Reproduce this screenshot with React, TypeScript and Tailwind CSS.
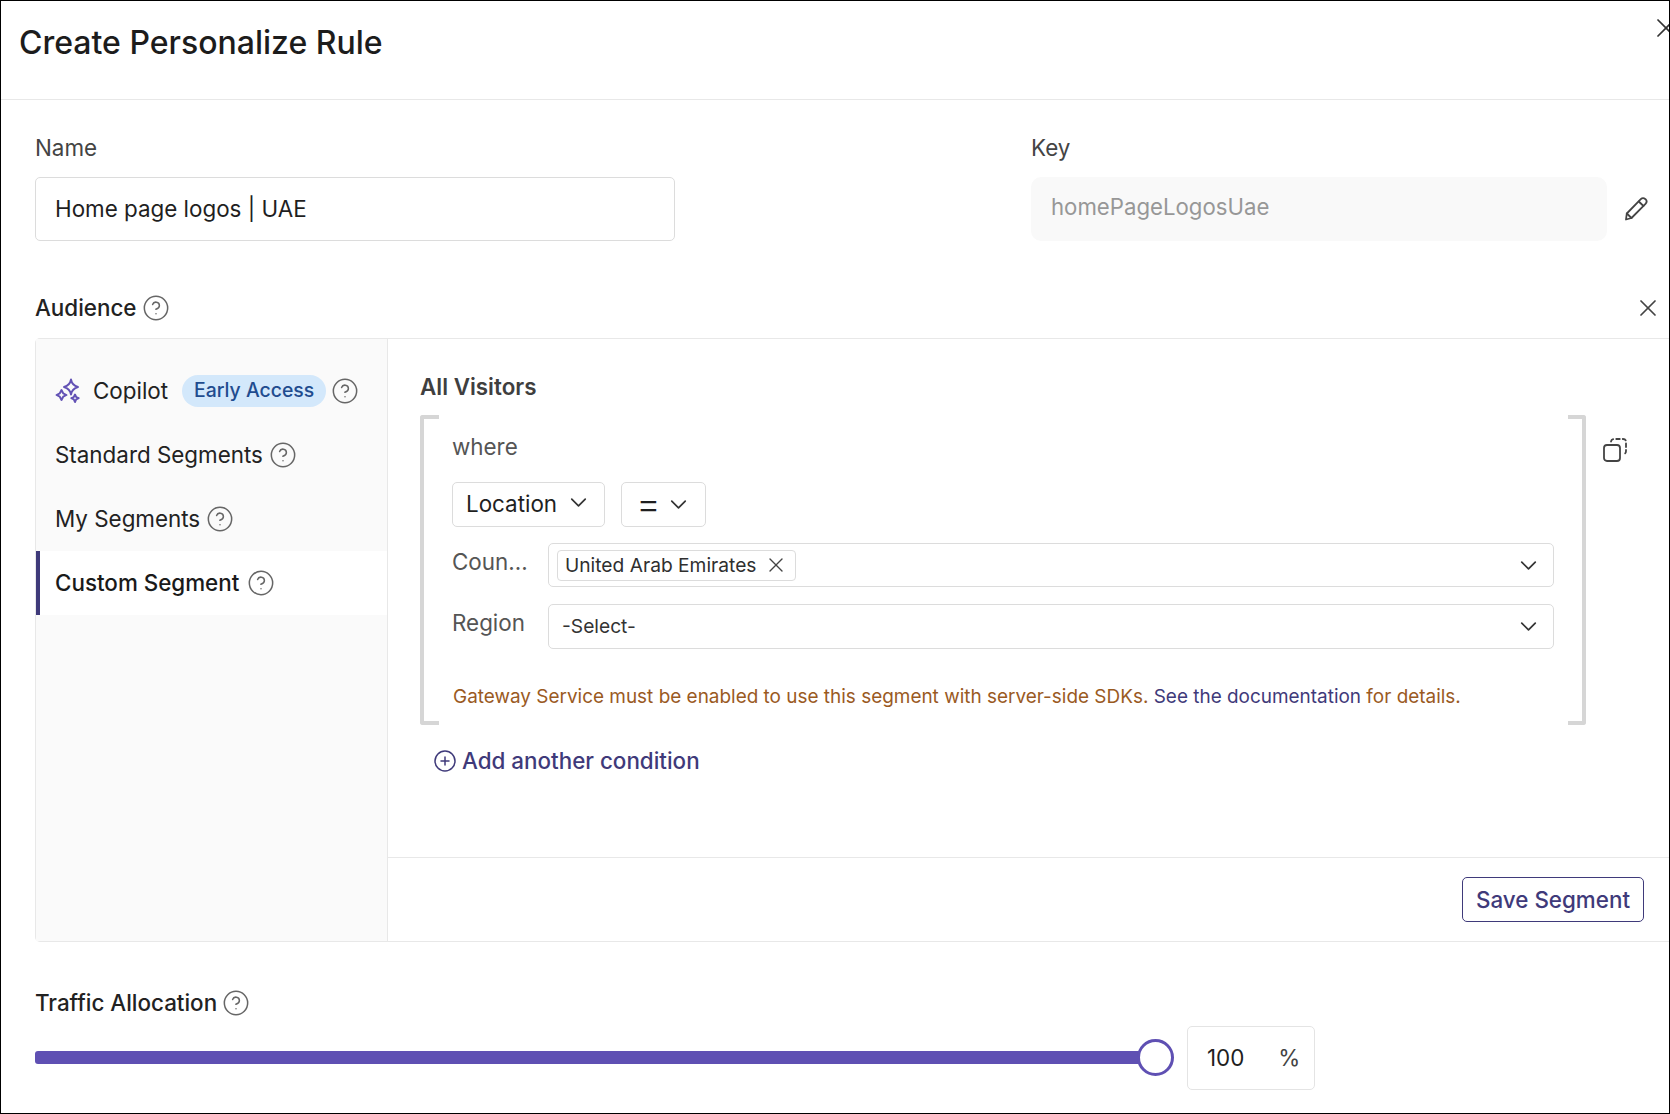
import { ChevronDown, CircleHelp, CirclePlus, X } from "lucide-react";

const Help = ({ className = "" }: { className?: string }) => (
  <CircleHelp size={28} strokeWidth={1.300} className={`text-[#666666] shrink-0 ${className}`} />
);

const Chevron = ({ className = "" }: { className?: string }) => (
  <ChevronDown size={27} strokeWidth={1.500} className={`-mx-[5.500px] shrink-0 text-[#333333] ${className}`} />
);

const Sparkles = () => (
  <svg width="26" height="26" viewBox="0 0 26 26" fill="none" stroke="#6352b5" strokeWidth="1.900" strokeLinejoin="round" className="shrink-0">
    <path d="M16 1.500 C16.800 6 18.500 7.800 23 9 C18.500 10.200 16.800 12 16 16.500 C15.200 12 13.500 10.200 9 9 C13.500 7.800 15.200 6 16 1.500Z" />
    <path d="M6.500 12 L8.200 15.300 L11.500 17 L8.200 18.700 L6.500 22 L4.800 18.700 L1.500 17 L4.800 15.300 Z" />
    <path d="M20 16.500 L21.200 19 L23.700 20.200 L21.200 21.400 L20 24 L18.800 21.400 L16.300 20.200 L18.800 19 Z" />
  </svg>
);

const Pencil = () => (
  <svg width="26" height="26" viewBox="0 0 26 26" fill="none" stroke="#444444" strokeWidth="1.800" strokeLinejoin="round" strokeLinecap="round" className="shrink-0">
    <path d="M3 23.500 L3.800 17.500 L17.800 3.200 C19 2 21 2 22.500 3.200 C23.800 4.500 23.800 6.500 22.500 7.800 L8.500 22 Z" />
    <path d="M15.800 5.500 L20.500 10" />
    <path d="M3.800 17.500 L8.500 22" />
  </svg>
);

const Duplicate = () => (
  <svg width="26" height="26" viewBox="0 0 26 26" fill="none" stroke="#444444" strokeWidth="1.800" strokeLinecap="round" className="shrink-0">
    <rect x="2" y="8" width="16" height="16" rx="3" />
    <path d="M9 4.500 C9.300 2.800 10.300 2 12 2 H21 C23 2 24 3 24 5 V14 C24 15.800 23.200 16.800 21.500 17" strokeDasharray="3.500 3" />
  </svg>
);

const Field = ({ children, className = "" }: { children: React.ReactNode; className?: string }) => (
  <div className={`flex items-center justify-between rounded-[5px] border border-[#dcdcdc] bg-white ${className}`}>{children}</div>
);

const NavItem = ({ children, active }: { children: React.ReactNode; active?: boolean }) => (
  <div
    className={`flex h-16 items-center text-[22.400px] ${
      active ? "gap-[8px] border-l-4 border-[#3f3a7a] bg-white pl-[15px] font-medium text-[#1a1a1a]" : "gap-[6px] pl-[19px] text-[#222222]"
    }`}
  >
    {children}
  </div>
);

export default function App() {
  return (
    <div className="relative flex h-[1114px] w-[1670px] flex-col overflow-hidden border-[1.500px] border-black bg-white font-['Inter',sans-serif] text-[#222222]">
      <X size={32} strokeWidth={1.300} className="absolute left-[1649px] top-[11px] text-[#333333]" />

      <header className="flex h-[99px] shrink-0 border-b border-[#e8e8e8] pl-[18px] pt-[18px]">
        <h1 className="text-[32px] font-medium leading-[48px] text-[#1c1c1c]">Create Personalize Rule</h1>
      </header>

      <main className="flex flex-1 flex-col pl-[34px]">
        <div className="mt-[33px] flex">
          <div className="w-[640px]">
            <div className="text-[22.400px] leading-[30px] text-[#444444]">Name</div>
            <Field className="mt-[14px] h-[64px] px-[19px] text-[22.400px] text-[#1f1f1f]">Home page logos | UAE</Field>
          </div>
          <div className="ml-[356px]">
            <div className="text-[22.400px] leading-[30px] text-[#444444]">Key</div>
            <div className="mt-[14px] flex items-center">
              <div className="flex h-[64px] w-[576px] items-center rounded-[10px] bg-[#f9f9f9] px-[20px] pb-[4px] text-[22.200px] text-[#979797]">homePageLogosUae</div>
              <span className="ml-[16px]"><Pencil /></span>
            </div>
          </div>
        </div>

        <div className="mt-[51px] flex h-[32px] items-center justify-between pr-[7px]">
          <div className="flex items-center gap-[5px] text-[22.400px] font-medium text-[#222222]">
            Audience <Help />
          </div>
          <X size={28} strokeWidth={1.500} className="text-[#444444]" />
        </div>

        <section className="-mr-[2px] mt-[14px] flex h-[604px] rounded-l-[5px] border-y border-l border-[#e8e8e8]">
          <aside className="w-[352px] shrink-0 border-r border-[#e8e8e8] bg-[#fafafa] pt-[20px]">
            <NavItem>
              <Sparkles />
              <span className="ml-[6px]">Copilot</span>
              <span className="ml-[8px] mr-[-1px] flex h-[32px] items-center rounded-full bg-[#d3e8fb] px-[12px] text-[19.400px] font-medium text-[#1f4c8f]">Early Access</span>
              <Help />
            </NavItem>
            <NavItem>Standard Segments <Help /></NavItem>
            <NavItem>My Segments <Help /></NavItem>
            <NavItem active>Custom Segment <Help /></NavItem>
          </aside>

          <div className="flex flex-1 flex-col">
            <div className="h-[519px] border-b border-[#e8e8e8] pl-[32px] pr-[26px]">
              <div className="pt-[32px] text-[22.400px] font-semibold leading-[32px] text-[#3f3f3f]">All Visitors</div>
              <div className="mt-[12px] flex">
                <div className="relative h-[310px] w-[1166px] px-[32px] before:absolute before:inset-y-0 before:left-0 before:w-[19px] before:rounded-l-[3px] before:border-y-4 before:border-l-4 before:border-[#d6d6d6] after:absolute after:inset-y-0 after:right-0 after:w-[18px] after:rounded-r-[3px] after:border-y-4 after:border-r-4 after:border-[#d6d6d6]">
                  <div className="pt-[15px] text-[22.400px] leading-[34px] text-[#555555]">where</div>
                  <div className="mt-[18px] flex gap-[16px]">
                    <Field className="h-[45px] w-[153px] pl-[13px] pr-[18px] text-[22.400px] text-[#1f1f1f]">
                      <span className="-mt-[2px]">Location</span>
                      <Chevron className="mb-[4px]" />
                    </Field>
                    <Field className="h-[45px] w-[85px] pl-[14px] pr-[19px] text-[38px] font-light leading-none text-[#1f1f1f]">
                      <span className="-mt-[3px]">=</span>
                      <Chevron />
                    </Field>
                  </div>
                  <div className="mt-[16px] flex">
                    <div className="w-[96px] pt-[1px] text-[22.400px] leading-[36px] text-[#555555]">Coun...</div>
                    <Field className="h-[44px] w-[1006px] pl-[8px] pr-[17px]">
                      <span className="flex h-[31px] w-[239px] items-center justify-between whitespace-nowrap rounded-[4px] border border-[#dcdcdc] pl-[7px] pr-[12px] text-[19.200px] text-[#2f2f2f]">
                        United Arab Emirates
                        <X size={24} strokeWidth={1.400} className="-mx-[5px] shrink-0 text-[#444444]" />
                      </span>
                      <Chevron />
                    </Field>
                  </div>
                  <div className="mt-[17px] flex">
                    <div className="w-[96px] pt-[1px] text-[22.400px] leading-[36px] text-[#555555]">Region</div>
                    <Field className="h-[45px] w-[1006px] pl-[13px] pr-[17px] text-[19.200px] text-[#333333]">
                      <span>-Select-</span>
                      <Chevron />
                    </Field>
                  </div>
                  <p className="ml-[1px] mt-[33px] whitespace-nowrap text-[18.950px] leading-[30px] text-[#9a5a1f]">
                    Gateway Service must be enabled to use this segment with server-side SDKs.{" "}
                    <span className="text-[#3f3a7a]">See the documentation</span> for details.
                  </p>
                </div>
                <span className="ml-[16px] mt-[22px]"><Duplicate /></span>
              </div>
              <div className="ml-[13px] mt-[19px] flex items-center gap-[5px] text-[22.400px] font-medium text-[#3f3a7a]">
                <CirclePlus size={24} strokeWidth={1.500} />
                Add another condition
              </div>
            </div>
            <div className="flex flex-1 items-start justify-end pr-[27px] pt-[19px]">
              <button className="flex h-[45px] w-[182px] items-center justify-center rounded-[5px] border border-[#3f3a7a] text-[22.400px] font-medium text-[#3f3a7a]">Save Segment</button>
            </div>
          </div>
        </section>

        <div className="mt-[45px] flex h-[32px] items-center gap-[5px] text-[22.400px] font-medium text-[#222222]">
          Traffic Allocation <Help />
        </div>

        <div className="mt-[7px] flex items-center">
          <div className="mb-[2px] h-[13px] w-[1104px] rounded-l-[3px] bg-[#5f50b3]" />
          <div className="-ml-[2px] mb-[2px] h-[37px] w-[37px] rounded-full border-[3px] border-[#5f50b3] bg-white" />
          <div className="ml-[13px] flex h-[64px] w-[128px] items-center rounded-[5px] border border-[#e4e4e4] pl-[19px] text-[22.400px] text-[#1f1f1f]">
            <span>100</span>
            <span className="ml-[34px] text-[#444444]">%</span>
          </div>
        </div>
      </main>
    </div>
  );
}
